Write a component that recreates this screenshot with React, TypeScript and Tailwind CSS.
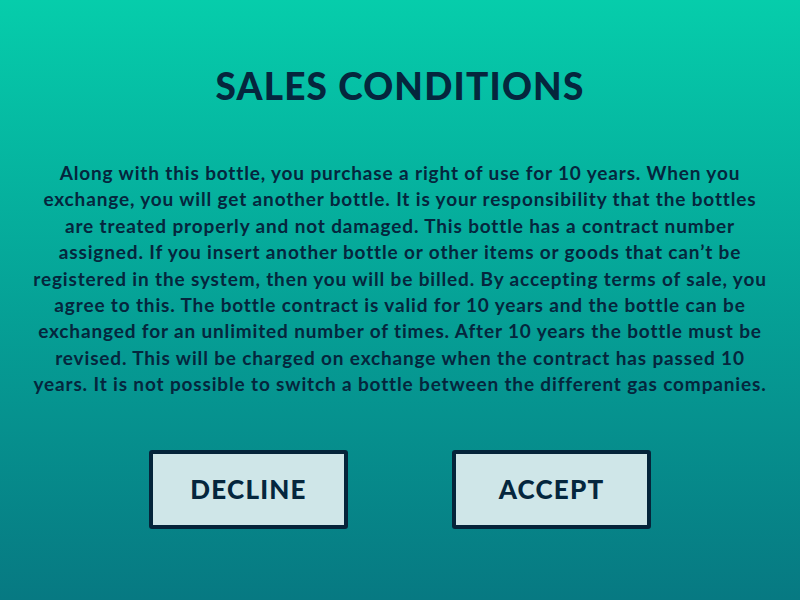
import React from 'react';

const lines = [
  'Along with this bottle, you purchase a right of use for 10 years. When you',
  'exchange, you will get another bottle. It is your responsibility that the bottles',
  'are treated properly and not damaged. This bottle has a contract number',
  'assigned. If you insert another bottle or other items or goods that can\u2019t be',
  'registered in the system, then you will be billed. By accepting terms of sale, you',
  'agree to this. The bottle contract is valid for 10 years and the bottle can be',
  'exchanged for an unlimited number of times. After 10 years the bottle must be',
  'revised. This will be charged on exchange when the contract has passed 10',
  'years. It is not possible to switch a bottle between the different gas companies.',
];

export default function App() {
  return (
    <div className="w-[800px] h-[600px] flex flex-col items-center bg-gradient-to-b from-[#06cdab] to-[#077982] text-[#05263d] font-['Lato',sans-serif]">
      <h1 className="mt-[64px] text-[37px] leading-[44px] font-black tracking-[1.2px]">SALES CONDITIONS</h1>
      <div className="mt-[52px] text-center text-[19px] leading-[26.4px] font-bold tracking-[0.85px] whitespace-nowrap">
        {lines.map((l) => (
          <div key={l}>{l}</div>
        ))}
      </div>
      <div className="mt-[52px] flex gap-[104px]">
        <button className="w-[199px] h-[79px] bg-[#cfe6e8] border-[4px] border-[#05243a] rounded-[3px] text-[26px] font-black tracking-[1.2px]">
          DECLINE
        </button>
        <button className="w-[199px] h-[79px] bg-[#cfe6e8] border-[4px] border-[#05243a] rounded-[3px] text-[26px] font-black tracking-[1.2px]">
          ACCEPT
        </button>
      </div>
    </div>
  );
}
